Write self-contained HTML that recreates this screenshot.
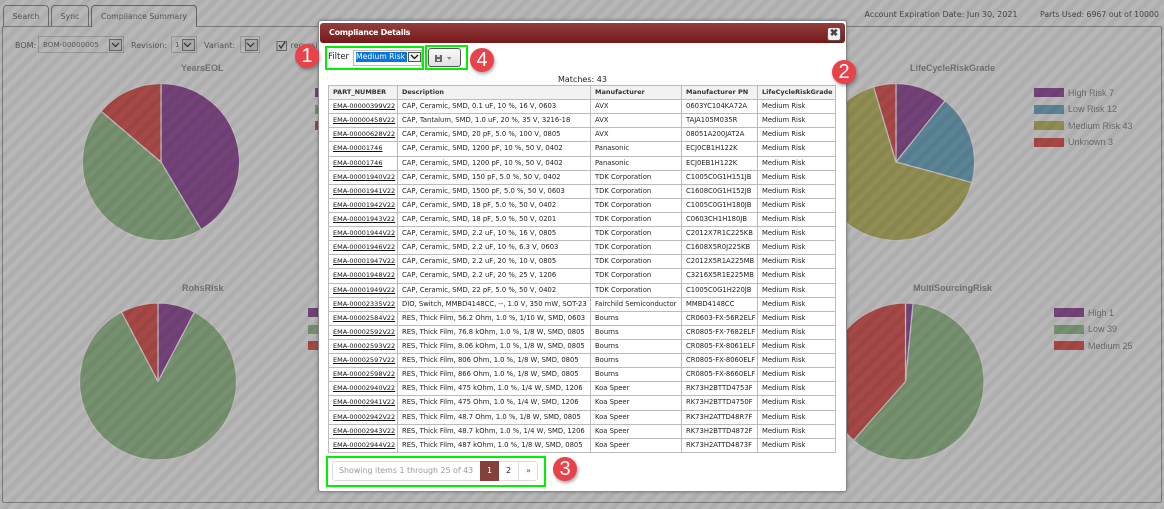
<!DOCTYPE html>
<html><head><meta charset="utf-8"><style>
*{box-sizing:border-box}
html,body{margin:0;padding:0}
body{width:1164px;height:509px;position:relative;overflow:hidden;background:#fff;font-family:"DejaVu Sans","Liberation Sans",sans-serif;font-size:8px;color:#222}
.a{position:absolute;white-space:nowrap}
#bg{position:absolute;left:0;top:0;width:1164px;height:509px;background:#b7b7b7}
#ov{position:absolute;left:0;top:0;width:1164px;height:509px;background:repeating-linear-gradient(135deg,rgba(0,0,0,.05) 0 5px,rgba(0,0,0,0) 5px 10px)}
.tab{position:absolute;border:1px solid #6e6e6e;border-bottom:none;border-radius:4px 4px 0 0;color:#555;text-align:center;line-height:21px;background:#b7b7b7;font-size:7.8px}
.sel{position:absolute;border:1px solid #999;color:#5a5a5a;line-height:15px;padding-left:4px;font-size:7.2px}
.sel i{position:absolute;right:1px;top:2px;bottom:1px;width:13px;border:1px solid #666;background:#aaa}
.t{font:bold 9px "Liberation Sans",sans-serif;color:#717171}
.l{font:9px "Liberation Sans",sans-serif;color:#6a6a6a}
.sw{position:absolute;width:30px;height:9px}
#modal{position:absolute;left:318px;top:20px;width:529px;height:472px;background:#fff;border:1px solid #888;border-radius:3px;box-shadow:0 0 3px rgba(0,0,0,.3)}
#bar{position:absolute;left:320px;top:23px;width:525px;height:20px;border-radius:3px;background:linear-gradient(#923f3f,#761818);color:#fff;font-weight:bold;line-height:20px;padding-left:9px;letter-spacing:-.3px;font-size:8px}
#tbl{position:absolute;left:328px;top:85px;width:508px;border-top:1px solid #bbb;border-left:1px solid #bbb;font-size:6.8px}
.r{display:flex;height:14.12px;border-bottom:1px solid #bbb;line-height:13px;color:#222;overflow:hidden}
.r span{display:block;border-right:1px solid #bbb;padding-left:4px;white-space:nowrap;overflow:hidden}
.r span:nth-child(1){width:69px}.r span:nth-child(2){width:193px}.r span:nth-child(3){width:91px}.r span:nth-child(4){width:76px}.r span:nth-child(5){width:78px}
.r u{color:#111;font-size:6.5px}
.h{background:#f2f2f2;font-weight:bold;color:#333;font-size:6.5px}
.g{position:absolute;border:2px solid #00f000}
.b{position:absolute;width:24px;height:24px;border-radius:50%;background:#e8424a;color:#fff;font:20px/24px "Liberation Sans",sans-serif;text-align:center;box-shadow:1px 2px 3px rgba(0,0,0,.35)}
</style></head><body>
<div id="bg"></div>
<div class="a" style="left:2px;top:26px;width:1160px;height:477px;border:1px solid #7c7c7c;border-radius:2px"></div>
<div class="tab" style="left:3px;top:5px;width:46px;height:21px">Search</div>
<div class="tab" style="left:51px;top:5px;width:38px;height:21px">Sync</div>
<div class="tab" style="left:91px;top:5px;width:106px;height:22px;border-color:#666">Compliance Summary</div>
<div class="a" style="left:864.500px;top:10px;color:#444">Account Expiration Date: Jun 30, 2021</div>
<div class="a" style="left:1040px;top:10px;color:#444;font-size:7.800px">Parts Used: 6967 out of 10000</div>
<div class="a" style="left:15px;top:41px;color:#555">BOM:</div>
<div class="sel" style="left:38px;top:36px;width:86px;height:17px">BOM-00000005<i></i></div>
<div class="a" style="left:131px;top:41px;color:#555">Revision:</div>
<div class="sel" style="left:171px;top:36px;width:26px;height:17px;padding-left:3px">1<i></i></div>
<div class="a" style="left:204px;top:41px;color:#555">Variant:</div>
<div class="sel" style="left:240px;top:36px;width:20px;height:17px"><i></i></div>
<svg class="a" style="left:0;top:0" width="320" height="60"><g fill="none" stroke="#333" stroke-width="1.2"><path d="M112 43l3.500 3.500 3.500-3.500M184 43l3.500 3.500 3.500-3.500M247 43l3.500 3.500 3.500-3.500"/><path d="M279 45l2 3 4-6"/></g><rect x="277" y="41.500" width="9.500" height="9" fill="none" stroke="#666"/></svg>
<div class="a" style="left:290.500px;top:41px;color:#555">recursive</div>

<svg class="a" style="left:0;top:0" width="1164" height="509" stroke="#c0bcbc" stroke-width="1.200" stroke-linejoin="round">
<path fill="#734279" d="M161 162L161 83.500A78.500 78.500 0 0 1 201.100 229.500Z"/>
<path fill="#76916f" d="M161 162L201.100 229.500A78.500 78.500 0 0 1 101.100 111.200Z"/>
<path fill="#a64846" d="M161 162L101.100 111.200A78.500 78.500 0 0 1 161 83.500Z"/>
<path fill="#734279" d="M158 381.500L158 303A78.500 78.500 0 0 1 194.500 312Z"/>
<path fill="#76916f" d="M158 381.500L194.500 312A78.500 78.500 0 1 1 121.500 312Z"/>
<path fill="#a64846" d="M158 381.500L121.500 312A78.500 78.500 0 0 1 158 303Z"/>
<path fill="#734279" d="M896 162L896 83.500A78.500 78.500 0 0 1 945.100 100.800Z"/>
<path fill="#5a8496" d="M896 162L945.100 100.800A78.500 78.500 0 0 1 971.800 182.600Z"/>
<path fill="#908d52" d="M896 162L971.800 182.600A78.500 78.500 0 1 1 873.600 86.800Z"/>
<path fill="#a64846" d="M896 162L873.600 86.800A78.500 78.500 0 0 1 896 83.500Z"/>
<path fill="#734279" d="M905.500 381.500L905.500 303A78.500 78.500 0 0 1 913.100 303.400Z"/>
<path fill="#76916f" d="M905.500 381.500L913.100 303.400A78.500 78.500 0 1 1 853.500 440.300Z"/>
<path fill="#a64846" d="M905.500 381.500L853.500 440.300A78.500 78.500 0 0 1 905.500 303Z"/>
</svg>
<div class="a t" style="left:181px;top:63px">YearsEOL</div>
<div class="a t" style="left:182px;top:283px">RohsRisk</div>
<div class="a t" style="left:910px;top:63px">LifeCycleRiskGrade</div>
<div class="a t" style="left:913px;top:283px">MultiSourcingRisk</div>
<div class="sw" style="left:315px;top:88px;background:#734279"></div>
<div class="sw" style="left:315px;top:105px;background:#76916f"></div>
<div class="sw" style="left:315px;top:121px;background:#a64846"></div>
<div class="sw" style="left:308px;top:308px;background:#734279"></div>
<div class="sw" style="left:308px;top:325px;background:#76916f"></div>
<div class="sw" style="left:308px;top:341px;background:#a64846"></div>
<div class="sw" style="left:1034px;top:88px;background:#734279"></div><div class="a l" style="left:1068px;top:88px">High Risk 7</div>
<div class="sw" style="left:1034px;top:105px;background:#5a8496"></div><div class="a l" style="left:1068px;top:104px">Low Risk 12</div>
<div class="sw" style="left:1034px;top:121px;background:#908d52"></div><div class="a l" style="left:1068px;top:121px">Medium Risk 43</div>
<div class="sw" style="left:1034px;top:138px;background:#a64846"></div><div class="a l" style="left:1068px;top:137px">Unknown 3</div>
<div class="sw" style="left:1054px;top:308px;background:#734279"></div><div class="a l" style="left:1088px;top:308px">High 1</div>
<div class="sw" style="left:1054px;top:325px;background:#76916f"></div><div class="a l" style="left:1088px;top:324px">Low 39</div>
<div class="sw" style="left:1054px;top:341px;background:#a64846"></div><div class="a l" style="left:1088px;top:341px">Medium 25</div>
<div id="ov"></div>

<div id="modal"></div>
<div id="bar">Compliance Details</div>
<div class="a" style="left:827px;top:27px;width:14px;height:14px;border:1px solid #555;border-radius:3px;background:#eee;color:#444;font:bold 10px/12px 'Liberation Sans',sans-serif;text-align:center">✖</div>

<div class="g" style="left:325px;top:46px;width:99px;height:24px"></div>
<div class="a" style="left:328px;top:52px;font-size:8.500px">Filter</div>
<div class="a" style="left:353px;top:50px;width:69px;height:16px;border:1px solid #bbb"></div>
<div class="a" style="left:356px;top:52px;width:51px;height:10px;background:#0a74dc;color:#fff;line-height:10px;font-size:7.700px">Medium Risk</div>
<div class="a" style="left:408px;top:52px;width:13px;height:10px;border:1px solid #555;background:#f0f0f0"></div>
<svg class="a" style="left:408px;top:52px" width="13" height="10"><path d="M3 3l3.500 3.500 3.500-3.500" fill="none" stroke="#111" stroke-width="1.300"/></svg>
<div class="g" style="left:425px;top:45px;width:43px;height:25px"></div>
<div class="a" style="left:428px;top:48px;width:33px;height:19px;border:1px solid #555;border-radius:3px;background:linear-gradient(#fafafa,#e0e0e0)"></div>
<svg class="a" style="left:428px;top:48px" width="33" height="19"><path d="M7 7h7v7H7z" fill="#666"/><path d="M9 7h3v2H9z M9 11h3v2H9z" fill="#ddd"/><path d="M19 9h4.500l-2.250 3z" fill="#888"/></svg>
<div class="a" style="left:558px;top:75px;font-size:8px">Matches: 43</div>

<div id="tbl">
<div class="r h"><span>PART_NUMBER</span><span>Description</span><span>Manufacturer</span><span>Manufacturer PN</span><span>LifeCycleRiskGrade</span></div>
<div class="r"><span><u>EMA-00000399V22</u></span><span>CAP, Ceramic, SMD, 0.1 uF, 10 %, 16 V, 0603</span><span>AVX</span><span>0603YC104KA72A</span><span>Medium Risk</span></div>
<div class="r"><span><u>EMA-00000458V22</u></span><span>CAP, Tantalum, SMD, 1.0 uF, 20 %, 35 V, 3216-18</span><span>AVX</span><span>TAJA105M035R</span><span>Medium Risk</span></div>
<div class="r"><span><u>EMA-00000628V22</u></span><span>CAP, Ceramic, SMD, 20 pF, 5.0 %, 100 V, 0805</span><span>AVX</span><span>08051A200JAT2A</span><span>Medium Risk</span></div>
<div class="r"><span><u>EMA-00001746</u></span><span>CAP, Ceramic, SMD, 1200 pF, 10 %, 50 V, 0402</span><span>Panasonic</span><span>ECJ0CB1H122K</span><span>Medium Risk</span></div>
<div class="r"><span><u>EMA-00001746</u></span><span>CAP, Ceramic, SMD, 1200 pF, 10 %, 50 V, 0402</span><span>Panasonic</span><span>ECJ0EB1H122K</span><span>Medium Risk</span></div>
<div class="r"><span><u>EMA-00001940V22</u></span><span>CAP, Ceramic, SMD, 150 pF, 5.0 %, 50 V, 0402</span><span>TDK Corporation</span><span>C1005C0G1H151JB</span><span>Medium Risk</span></div>
<div class="r"><span><u>EMA-00001941V22</u></span><span>CAP, Ceramic, SMD, 1500 pF, 5.0 %, 50 V, 0603</span><span>TDK Corporation</span><span>C1608C0G1H152JB</span><span>Medium Risk</span></div>
<div class="r"><span><u>EMA-00001942V22</u></span><span>CAP, Ceramic, SMD, 18 pF, 5.0 %, 50 V, 0402</span><span>TDK Corporation</span><span>C1005C0G1H180JB</span><span>Medium Risk</span></div>
<div class="r"><span><u>EMA-00001943V22</u></span><span>CAP, Ceramic, SMD, 18 pF, 5.0 %, 50 V, 0201</span><span>TDK Corporation</span><span>C0603CH1H180JB</span><span>Medium Risk</span></div>
<div class="r"><span><u>EMA-00001944V22</u></span><span>CAP, Ceramic, SMD, 2.2 uF, 10 %, 16 V, 0805</span><span>TDK Corporation</span><span>C2012X7R1C225KB</span><span>Medium Risk</span></div>
<div class="r"><span><u>EMA-00001946V22</u></span><span>CAP, Ceramic, SMD, 2.2 uF, 10 %, 6.3 V, 0603</span><span>TDK Corporation</span><span>C1608X5R0J225KB</span><span>Medium Risk</span></div>
<div class="r"><span><u>EMA-00001947V22</u></span><span>CAP, Ceramic, SMD, 2.2 uF, 20 %, 10 V, 0805</span><span>TDK Corporation</span><span>C2012X5R1A225MB</span><span>Medium Risk</span></div>
<div class="r"><span><u>EMA-00001948V22</u></span><span>CAP, Ceramic, SMD, 2.2 uF, 20 %, 25 V, 1206</span><span>TDK Corporation</span><span>C3216X5R1E225MB</span><span>Medium Risk</span></div>
<div class="r"><span><u>EMA-00001949V22</u></span><span>CAP, Ceramic, SMD, 22 pF, 5.0 %, 50 V, 0402</span><span>TDK Corporation</span><span>C1005C0G1H220JB</span><span>Medium Risk</span></div>
<div class="r"><span><u>EMA-00002335V22</u></span><span>DIO, Switch, MMBD4148CC, --, 1.0 V, 350 mW, SOT-23</span><span>Fairchild Semiconductor</span><span>MMBD4148CC</span><span>Medium Risk</span></div>
<div class="r"><span><u>EMA-00002584V22</u></span><span>RES, Thick Film, 56.2 Ohm, 1.0 %, 1/10 W, SMD, 0603</span><span>Bourns</span><span>CR0603-FX-56R2ELF</span><span>Medium Risk</span></div>
<div class="r"><span><u>EMA-00002592V22</u></span><span>RES, Thick Film, 76.8 kOhm, 1.0 %, 1/8 W, SMD, 0805</span><span>Bourns</span><span>CR0805-FX-7682ELF</span><span>Medium Risk</span></div>
<div class="r"><span><u>EMA-00002593V22</u></span><span>RES, Thick Film, 8.06 kOhm, 1.0 %, 1/8 W, SMD, 0805</span><span>Bourns</span><span>CR0805-FX-8061ELF</span><span>Medium Risk</span></div>
<div class="r"><span><u>EMA-00002597V22</u></span><span>RES, Thick Film, 806 Ohm, 1.0 %, 1/8 W, SMD, 0805</span><span>Bourns</span><span>CR0805-FX-8060ELF</span><span>Medium Risk</span></div>
<div class="r"><span><u>EMA-00002598V22</u></span><span>RES, Thick Film, 866 Ohm, 1.0 %, 1/8 W, SMD, 0805</span><span>Bourns</span><span>CR0805-FX-8660ELF</span><span>Medium Risk</span></div>
<div class="r"><span><u>EMA-00002940V22</u></span><span>RES, Thick Film, 475 kOhm, 1.0 %, 1/4 W, SMD, 1206</span><span>Koa Speer</span><span>RK73H2BTTD4753F</span><span>Medium Risk</span></div>
<div class="r"><span><u>EMA-00002941V22</u></span><span>RES, Thick Film, 475 Ohm, 1.0 %, 1/4 W, SMD, 1206</span><span>Koa Speer</span><span>RK73H2BTTD4750F</span><span>Medium Risk</span></div>
<div class="r"><span><u>EMA-00002942V22</u></span><span>RES, Thick Film, 48.7 Ohm, 1.0 %, 1/8 W, SMD, 0805</span><span>Koa Speer</span><span>RK73H2ATTD48R7F</span><span>Medium Risk</span></div>
<div class="r"><span><u>EMA-00002943V22</u></span><span>RES, Thick Film, 48.7 kOhm, 1.0 %, 1/4 W, SMD, 1206</span><span>Koa Speer</span><span>RK73H2BTTD4872F</span><span>Medium Risk</span></div>
<div class="r"><span><u>EMA-00002944V22</u></span><span>RES, Thick Film, 487 kOhm, 1.0 %, 1/8 W, SMD, 0805</span><span>Koa Speer</span><span>RK73H2ATTD4873F</span><span>Medium Risk</span></div>
</div>

<div class="g" style="left:326px;top:456px;width:220px;height:31px"></div>
<div class="a" style="left:332px;top:461px;width:206px;height:20px;border:1px solid #ddd;border-radius:3px;color:#999;line-height:18px;padding-left:6px;font-size:7.900px">Showing items 1 through 25 of 43</div>
<div class="a" style="left:480px;top:461px;width:19px;height:20px;background:#84413c;color:#fff;text-align:center;line-height:20px">1</div>
<div class="a" style="left:499px;top:461px;width:19px;height:20px;color:#222;text-align:center;line-height:20px">2</div>
<div class="a" style="left:518px;top:461px;width:1px;height:20px;background:#ddd"></div>
<div class="a" style="left:519px;top:461px;width:19px;height:20px;color:#7a3a3a;text-align:center;line-height:20px">»</div>

<div class="b" style="left:295px;top:44px">1</div>
<div class="b" style="left:832px;top:60px">2</div>
<div class="b" style="left:553px;top:457px">3</div>
<div class="b" style="left:470px;top:48px">4</div>
</body></html>
